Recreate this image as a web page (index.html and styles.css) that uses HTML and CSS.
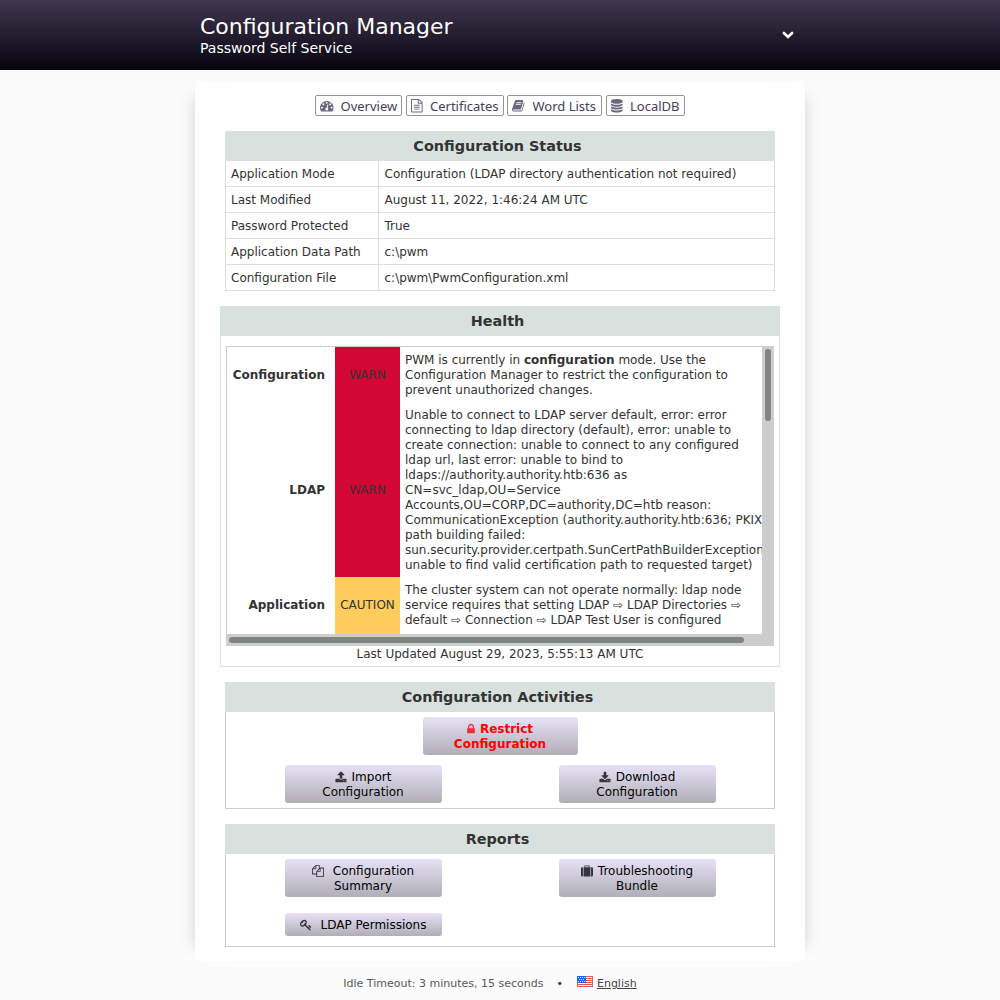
FILE: index.html
```html
<!DOCTYPE html>
<html lang="en">
<head>
<meta charset="utf-8">
<title>Configuration Manager</title>
<link rel="stylesheet" href="styles.css">
</head>
<body>
<header class="header">
  <div class="header-inner">
    <div>
      <div class="header-title">Configuration Manager</div>
      <div class="header-sub">Password Self Service</div>
    </div>
    <svg class="chevron" viewBox="0 0 12 8"><path d="M1.9 2l4.1 4 4.1-4" fill="none" stroke="#fff" stroke-width="2.6" stroke-linecap="round"/></svg>
  </div>
</header>
<main class="card">
  <nav class="nav">
    <a class="tab tab-overview"><svg class="icon" viewBox="0 0 1792 1792"><path d="M384 1152q0-53-37.5-90.5T256 1024t-90.5 37.5T128 1152t37.5 90.5T256 1280t90.5-37.5T384 1152zm192-448q0-53-37.5-90.5T448 576t-90.5 37.5T320 704t37.5 90.5T448 832t90.5-37.5T576 704zm428 481l101-382q6-26-7.5-48.5T1059 725t-48 6.5-30 39.5l-101 382q-60 5-107 43.5t-63 98.5q-20 77 20 146t117 89 146-20 89-117q16-60-6-117t-72-91zm660-33q0-53-37.5-90.5T1536 1024t-90.5 37.5-37.5 90.5 37.5 90.5 90.5 37.5 90.5-37.5 37.5-90.5zm-640-640q0-53-37.5-90.5T896 384t-90.5 37.5T768 512t37.5 90.5T896 640t90.5-37.5T1024 512zm448 192q0-53-37.5-90.5T1344 576t-90.5 37.5T1216 704t37.5 90.5T1344 832t90.5-37.5T1472 704zm320 448q0 261-141 483-19 29-54 29H195q-35 0-54-29Q0 1414 0 1152q0-182 71-348t191-286 286-191 348-71 348 71 286 191 191 286 71 348z"/></svg><span>Overview</span></a>
    <a class="tab tab-certs"><svg class="icon" viewBox="128 0 1792 1792"><path d="M1596 380q28 28 48 76t20 88v1152q0 40-28 68t-68 28H224q-40 0-68-28t-28-68V96q0-40 28-68t68-28h896q40 0 88 20t76 48zm-444-244v376h376q-10-29-22-41l-313-313q-12-12-41-22zm384 1528V640h-416q-40 0-68-28t-28-68V128H256v1536h1280zM512 800q0-14 9-23t23-9h704q14 0 23 9t9 23v64q0 14-9 23t-23 9H544q-14 0-23-9t-9-23v-64zm736 224q14 0 23 9t9 23v64q0 14-9 23t-23 9H544q-14 0-23-9t-9-23v-64q0-14 9-23t23-9h704zm0 256q14 0 23 9t9 23v64q0 14-9 23t-23 9H544q-14 0-23-9t-9-23v-64q0-14 9-23t23-9h704z"/></svg><span>Certificates</span></a>
    <a class="tab tab-words"><svg class="icon" viewBox="64 0 1792 1792"><path d="M1703 478q40 57 18 129l-275 906q-19 64-76.5 107.5T1247 1664H324q-77 0-148.5-53.5T76 1479q-24-67-2-127 0-4 3-27t4-37q1-8-3-21.5t-3-19.5q2-11 8-21t16.5-23.5T116 1179q23-38 45-91.5t30-91.5q3-10 .5-30t-.5-28q3-11 17-28t17-23q21-36 42-92t25-90q1-9-2.5-32t.5-28q4-13 22-30.5t22-22.5q19-26 42.5-84.5T404 411q1-8-3-25.5t-2-26.5q2-8 9-18t18-23 17-21q8-12 16.5-30.5t15-35 16-36T511 164t26.5-23.5 36-11.5T621 135l-1 3q38-9 51-9h761q74 0 114 56t18 130l-274 906q-36 119-71.5 153.5T1090 1409H221q-27 0-38 15-11 16-1 43 24 70 144 70h923q29 0 56-15.5t35-41.5l300-987q7-22 5-57 38 15 59 43zm-1064 2q-4 13 2 22.5t20 9.5h608q13 0 25.5-9.5T1311 480l21-64q4-13-2-22.5t-20-9.5H702q-13 0-25.5 9.5T660 416zm-83 256q-4 13 2 22.5t20 9.5h608q13 0 25.5-9.5T1228 736l21-64q4-13-2-22.5t-20-9.5H619q-13 0-25.5 9.5T577 672z"/></svg><span>Word Lists</span></a>
    <a class="tab tab-db"><svg class="icon" viewBox="128 0 1792 1792"><path d="M896 768q237 0 443-43t325-127v170q0 69-103 128t-280 93.5-385 34.5-385-34.5T231 896 128 768V598q119 84 325 127t443 43zm0 768q237 0 443-43t325-127v170q0 69-103 128t-280 93.5-385 34.5-385-34.5-280-93.5-103-128v-170q119 84 325 127t443 43zm0-384q237 0 443-43t325-127v170q0 69-103 128t-280 93.5-385 34.5-385-34.5-280-93.5-103-128V982q119 84 325 127t443 43zM896 0q208 0 385 34.5t280 93.5 103 128v128q0 69-103 128t-280 93.5T896 640t-385-34.5T231 512 128 384V256q0-69 103-128t280-93.5T896 0z"/></svg><span>LocalDB</span></a>
  </nav>

  <section class="panel status">
    <h2 class="panel-title">Configuration Status</h2>
    <dl class="status-grid">
      <dt>Application Mode</dt><dd>Configuration (LDAP directory authentication not required)</dd>
      <dt>Last Modified</dt><dd>August 11, 2022, 1:46:24 AM UTC</dd>
      <dt>Password Protected</dt><dd>True</dd>
      <dt>Application Data Path</dt><dd>c:\pwm</dd>
      <dt>Configuration File</dt><dd>c:\pwm\PwmConfiguration.xml</dd>
    </dl>
  </section>

  <section class="panel health">
    <h2 class="panel-title">Health</h2>
    <div class="scroll-box">
      <div class="health-grid">
        <div class="topic">Configuration</div><div class="level warn">WARN</div>
        <div class="detail">PWM is currently in <b>configuration</b> mode. Use the<br>Configuration Manager to restrict the configuration to<br>prevent unauthorized changes.</div>
        <div class="topic">LDAP</div><div class="level warn">WARN</div>
        <div class="detail">Unable to connect to LDAP server default, error: error<br>connecting to ldap directory (default), error: unable to<br>create connection: unable to connect to any configured<br>ldap url, last error: unable to bind to<br>ldaps://authority.authority.htb:636 as<br>CN=svc_ldap,OU=Service<br>Accounts,OU=CORP,DC=authority,DC=htb reason:<br>CommunicationException (authority.authority.htb:636; PKIX<br>path building failed:<br>sun.security.provider.certpath.SunCertPathBuilderException<br>unable to find valid certification path to requested target)</div>
        <div class="topic">Application</div><div class="level caution">CAUTION</div>
        <div class="detail">The cluster system can not operate normally: ldap node<br>service requires that setting LDAP ⇨ LDAP Directories ⇨<br>default ⇨ Connection ⇨ LDAP Test User is configured</div>
        <div class="topic"></div><div class="level caution"></div><div class="detail"></div>
      </div>
      <div class="track-v"><div class="thumb-v"></div></div>
      <div class="track-h"><div class="thumb-h"></div></div>
    </div>
    <div class="updated">Last Updated August 29, 2023, 5:55:13 AM UTC</div>
  </section>

  <section class="panel actions">
    <h2 class="panel-title">Configuration Activities</h2>
    <div class="button-grid">
      <button class="btn btn-restrict"><svg class="icon-lock" viewBox="320 0 1152 1792"><path d="M640 768h512V576q0-106-75-181t-181-75-181 75-75 181v192zm832 96v576q0 40-28 68t-68 28H416q-40 0-68-28t-28-68V864q0-40 28-68t68-28h32V576q0-184 132-316t316-132 316 132 132 316v192h32q40 0 68 28t28 68z"/></svg>Restrict<br>Configuration</button>
      <button class="btn"><svg class="icon-btn" viewBox="64 0 1664 1792"><path d="M1344 1472q0-26-19-45t-45-19-45 19-19 45 19 45 45 19 45-19 19-45zm256 0q0-26-19-45t-45-19-45 19-19 45 19 45 45 19 45-19 19-45zm128-224v320q0 40-28 68t-68 28H160q-40 0-68-28t-28-68v-320q0-40 28-68t68-28h427q21 56 70.5 92t110.5 36h256q61 0 110.5-36t70.5-92h427q40 0 68 28t28 68zm-325-648q-17 40-59 40h-256v448q0 26-19 45t-45 19H768q-26 0-45-19t-19-45V640H448q-42 0-59-40-17-39 14-69l448-448q18-19 45-19t45 19l448 448q31 30 14 69z"/></svg>Import<br>Configuration</button>
      <button class="btn"><svg class="icon-btn" viewBox="64 -128 1664 1792"><path d="M1344 1344q0-26-19-45t-45-19-45 19-19 45 19 45 45 19 45-19 19-45zm256 0q0-26-19-45t-45-19-45 19-19 45 19 45 45 19 45-19 19-45zm128-224v320q0 40-28 68t-68 28H160q-40 0-68-28t-28-68v-320q0-40 28-68t68-28h465l135 136q58 56 136 56t136-56l136-136h464q40 0 68 28t28 68zm-325-569q17 41-14 70l-448 448q-18 19-45 19t-45-19L403 621q-31-29-14-70 17-39 59-39h256V64q0-26 19-45t45-19h256q26 0 45 19t19 45v448h256q42 0 59 39z"/></svg>Download<br>Configuration</button>
    </div>
  </section>

  <section class="panel reports">
    <h2 class="panel-title">Reports</h2>
    <div class="button-grid report-grid">
      <button class="btn"><svg class="icon-btn wide" viewBox="0 0 1792 1792"><path d="M1696 384q40 0 68 28t28 68v1216q0 40-28 68t-68 28H736q-40 0-68-28t-28-68v-288H96q-40 0-68-28t-28-68V640q0-40 20-88t48-76L476 68q28-28 76-48t88-20h416q40 0 68 28t28 68v328q68-40 128-40h416zm-544 213L853 896h299V597zM512 213L213 512h299V213zm196 647l316-316V128H640v416q0 40-28 68t-68 28H128v640h512v-256q0-40 20-88t48-76zm956 804V512h-384v416q0 40-28 68t-68 28H768v640h896z"/></svg>Configuration<br>Summary</button>
      <button class="btn"><svg class="icon-btn" viewBox="0 -64 1792 1792"><path d="M640 256h512V128H640v128zM288 256v1408h-64q-92 0-158-66T0 1440V480q0-92 66-158t158-66h64zm1120 0v1408H384V256h128V96q0-40 28-68t68-28h576q40 0 68 28t28 68v160h128zm384 224v960q0 92-66 158t-158 66h-64V256h64q92 0 158 66t66 158z"/></svg>Troubleshooting<br>Bundle</button>
      <button class="btn"><svg class="icon-btn wide" viewBox="0 0 1792 1792"><path d="M832 512q0-80-56-136t-136-56-136 56-56 136q0 42 19 83-41-19-83-19-80 0-136 56t-56 136 56 136 136 56 136-56 56-136q0-42-19-83 41 19 83 19 80 0 136-56t56-136zm851 704q0 17-49 66t-66 49q-9 0-28.5-16t-36.5-33-38.5-40-24.5-26l-96 96 220 220q28 28 28 68 0 42-39 81t-81 39q-40 0-68-28L733 1021q-176 131-365 131-163 0-265.5-102.5T0 784q0-160 95-313t248-248 313-95q163 0 265.5 102.5T1024 496q0 189-131 365l355 355 96-96q-3-3-26-24.5t-40-38.5-33-36.5-16-28.5q0-17 49-66t66-49q13 0 23 10 6 6 46 44.5t82 79.5 86.5 86 73 78 28.5 41z"/></svg>LDAP Permissions</button>
    </div>
  </section>
</main>
<footer class="footer">
  <span>Idle Timeout: 3 minutes, 15 seconds</span>
  <span class="dot">•</span>
  <svg class="flag" viewBox="0 0 16 11" shape-rendering="crispEdges"><path fill="#fff" d="M0 0h16v11H0z"/><path fill="#fb4a42" d="M9 2h6v1H9zM9 4h6v1H9zM9 6h6v1H9zM1 8h14v1H1z"/><path fill="#1e62e8" d="M0 0h9v7H0z"/><path fill="#d3e2fb" d="M1 1h1v1H1zM3 1h1v1H3zM5 1h1v1H5zM7 1h1v1H7zM2 3h1v1H2zM4 3h1v1H4zM6 3h1v1H6zM1 5h1v1H1zM3 5h1v1H3zM5 5h1v1H5zM7 5h1v1H7z"/><path fill="#d9605a" d="M9 0h7v1H9zM15 0h1v11h-1zM0 10h16v1H0zM0 7h1v4H0z"/></svg>
  <a class="lang">English</a>
</footer>
</body>
</html>
```

FILE: styles.css
```css
* { box-sizing: border-box; }
body {
  margin: 0;
  height: 1000px;
  overflow: hidden;
  background: #fbfbfb;
  color: #333;
  font: 12px/15px "DejaVu Sans", sans-serif;
}
.header {
  height: 70px;
  background: linear-gradient(#41374e, #070411);
  color: #fff;
}
.header-inner {
  width: 600px;
  margin: 0 auto;
  padding: 13px 6px 0 0;
  display: flex;
  justify-content: space-between;
  align-items: flex-start;
}
.header-title { font-size: 22px; line-height: 27px; }
.header-sub { font-size: 14px; line-height: 16px; }
.chevron { width: 12px; height: 8px; margin-top: 18px; }
.card {
  width: 610px;
  height: 879px;
  margin: 12px auto 0;
  padding: 13px 25px 0;
  background: #fff;
  border-radius: 5px;
  box-shadow: 15px 0 15px -15px rgba(0, 0, 0, .17), -15px 0 15px -15px rgba(0, 0, 0, .17);
}
.nav { display: flex; justify-content: center; gap: 4px; height: 21px; }
.tab {
  display: flex;
  align-items: center;
  gap: 7px;
  height: 21px;
  padding: 1px 0 0 4px;
  border: 1px solid #949494;
  border-radius: 2px;
  color: #46405a;
  font: 13px/18px "Noto Sans", sans-serif;
  white-space: nowrap;
}
.tab-overview { width: 87px; }
.tab-certs { width: 98px; gap: 5.5px; }
.tab-words { width: 95px; margin-left: -1px; }
.tab-db { width: 79px; gap: 5.5px; }
.icon { width: 13.5px; height: 13.5px; fill: #6b667b; flex: none; overflow: visible; }
.panel { margin: 15px 5px 0; border: 1px solid #ccc; border-top: 0; }
.panel-title {
  height: 30px;
  margin: 0 -1px;
  padding-right: 5px;
  background: #d9e1df;
  color: #333;
  font-size: 14.4px;
  line-height: 30px;
  text-align: center;
}
.status { border: 1px solid #d9e1df; border-top: 0; height: 160px; }
.status-grid { display: grid; grid-template-columns: 153px 1fr; margin: 0; }
.status-grid dt, .status-grid dd {
  height: 26px;
  margin: 0;
  padding: 6px 5px 4px;
  border-bottom: 1px solid #d9e1df;
}
.status-grid dt { border-right: 1px solid #d9e1df; }
.status-grid dd { padding-left: 5.5px; }
.health { margin: 15px 0 0; height: 361px; border-color: #d9e1df; }
.scroll-box {
  display: grid;
  grid-template: 287px 12px / 535px 12px;
  width: 548px;
  height: 300px;
  margin: 10px 5px 0;
  border: solid #ccc;
  border-width: 1px 0 0 1px;
}
.health-grid {
  display: grid;
  grid-template-columns: 108px 65px 362px;
  grid-template-rows: 55px 175px 55px 55px;
  overflow: hidden;
}
.health-grid > div { display: flex; align-items: center; padding-top: 2px; }
.health-grid .topic { justify-content: flex-end; padding-right: 10px; font-weight: bold; }
.health-grid .level { justify-content: center; }
.health-grid .detail { display: block; padding: 6px 0 4px 5px; white-space: nowrap; }
.warn { background: #d20734; }
.caution { background: #ffcd5b; }
.track-v { grid-area: 1 / 2 / 3 / 3; background: #cdcdcd; padding: 2px 3px; }
.thumb-v { height: 72px; border-radius: 3px; background: #7f8482; }
.track-h { grid-area: 2 / 1 / 3 / 2; background: #cdcdcd; margin-left: -1px; padding: 3px; }
.thumb-h { width: 515px; height: 6px; border-radius: 3px; background: #7f8482; }
.updated { padding-top: 1px; text-align: center; }
.actions { height: 127px; }
.button-grid {
  display: grid;
  grid-template-columns: 1fr 1fr;
  justify-items: center;
  align-items: start;
  row-gap: 10px;
  padding-top: 5px;
}
.report-grid { row-gap: 16px; }
.reports { height: 123px; }
.btn {
  width: 157px;
  padding: 5px 0 3px;
  border: 0;
  border-radius: 3px;
  background: linear-gradient(#e7e1f6, #b0aeb7);
  color: #000;
  font: inherit;
  text-align: center;
}
.btn-restrict { grid-column: 1 / 3; width: 155px; margin-left: 1px; padding-right: 1px; color: #f00; font-weight: bold; }
.icon-btn { width: 12px; height: 12px; margin-right: 5px; vertical-align: -2px; fill: #35333c; }
.icon-btn.wide { margin-right: 9px; }
.icon-lock { width: 8px; height: 12px; margin-right: 5px; vertical-align: -2px; fill: #f0303c; }
.footer {
  display: flex;
  justify-content: center;
  padding: 15px 20px 0 0;
  color: #595959;
  font-size: 11px;
}
.dot { margin: 0 13px; color: #333; }
.flag { width: 16px; height: 11px; margin: 0 4px 0 1px; }
.lang { text-decoration: underline; color: #444; }
```
